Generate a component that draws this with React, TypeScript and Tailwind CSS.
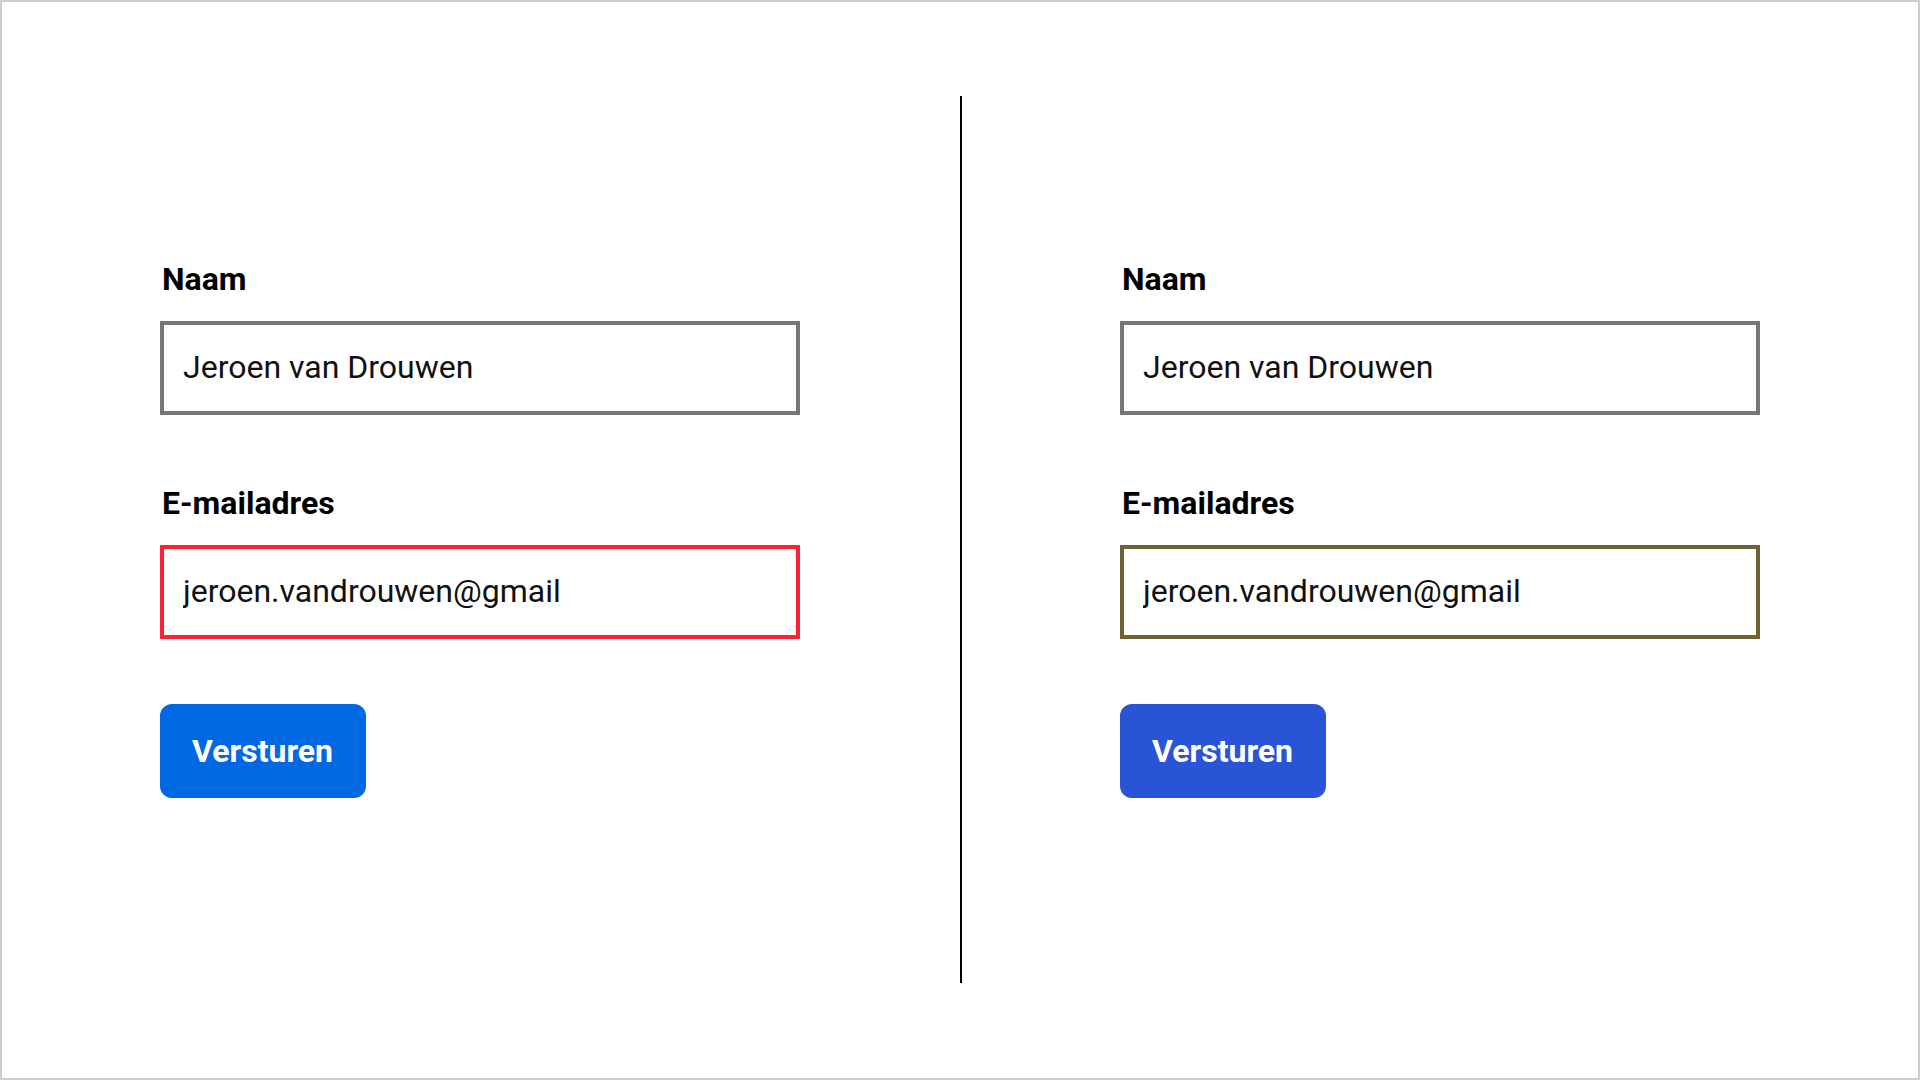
const fields = [
  { label: "Naam", value: "Jeroen van Drouwen" },
  { label: "E-mailadres", value: "jeroen.vandrouwen@gmail" },
];

function Form({ errorBorder, buttonBg, width }: { errorBorder: string; buttonBg: string; width: string }) {
  return (
    <div className={"pl-[158px] pt-[257px] " + width}>
      <div className="flex flex-col w-[640px]">
        {fields.map((f, i) => (
          <div key={f.label} className={i === 0 ? "flex flex-col" : "flex flex-col mt-[68px]"}>
            <label className="text-[32px] leading-[40px] font-bold text-black pl-[2px]">{f.label}</label>
            <input
              readOnly
              defaultValue={f.value}
              className={
                "mt-[22px] h-[94px] w-[640px] border-[4px] bg-white pl-[19px] pb-[2px] text-[32px] text-[#111] outline-none " +
                (i === 0 ? "border-[#767676]" : errorBorder)
              }
              style={{ fontFamily: "Roboto, 'Liberation Sans', sans-serif" }}
            />
          </div>
        ))}
        <button
          className={"mt-[65px] self-start h-[94px] pl-8 pr-[33px] rounded-[12px] text-white text-[32px] font-bold " + buttonBg}
        >
          Versturen
        </button>
      </div>
    </div>
  );
}

export default function App() {
  return (
    <div
      className="w-[1920px] h-[1080px] border-2 border-[#cccccc] bg-white flex"
      style={{ fontFamily: "Roboto, 'Liberation Sans', sans-serif" }}
    >
      <Form errorBorder="border-[#fe2236]" buttonBg="bg-[#0068e3]" width="w-[958px]" />
      <div className="w-[2px] bg-black mt-[94px] mb-[95px]" />
      <Form errorBorder="border-[#6f6232]" buttonBg="bg-[#2a54d6]" width="flex-1" />
    </div>
  );
}
